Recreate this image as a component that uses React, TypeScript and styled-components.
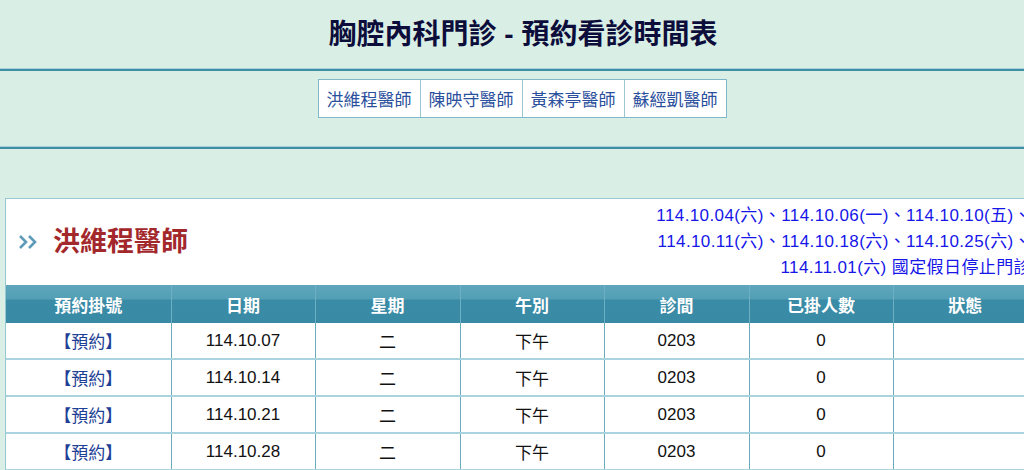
import React from "react";
import styled, { createGlobalStyle } from "styled-components";

const Global = createGlobalStyle`
  html, body { margin: 0; padding: 0; overflow: hidden; }
  body {
    background: #d9efe5;
    font-family: "Liberation Sans", "Noto Sans CJK TC", sans-serif;
  }
`;

const Page = styled.div`
  width: 1024px;
  height: 470px;
  overflow: hidden;
`;

const TitleBar = styled.header`
  height: 68px;
  box-sizing: border-box;
  padding-top: 2px;
  display: flex;
  align-items: center;
  justify-content: center;
`;

const Title = styled.h1`
  margin: 0;
  padding-left: 22px;
  font-size: 28px;
  line-height: 34px;
  font-weight: bold;
  color: #0d0d3c;
`;

const Divider = styled.div`
  height: 3px;
  background: linear-gradient(to bottom, #a6d1da 0, #a6d1da 1px, #3f8ea5 1px, #3f8ea5 3px);
`;

const Nav = styled.nav`
  height: 75px;
  box-sizing: border-box;
  padding-top: 8px;
  display: flex;
  justify-content: center;
  padding-left: 20px;
`;

const Tabs = styled.div`
  display: flex;
  height: 37px;
  border: 1px solid #80b7c9;
  background: #fff;
`;

const Tab = styled.a`
  display: flex;
  align-items: center;
  padding: 0 8px;
  font-size: 17px;
  color: #2a4f9c;
  text-decoration: none;
  & + & { border-left: 1px solid #9cc6d3; }
`;

const Box = styled.section`
  margin: 49px 0 0 5px;
  width: 1033px;
  background: #fff;
  border: 1px solid #97c9d3;
  border-bottom: none;
`;

const BoxHead = styled.div`
  height: 86px;
  display: flex;
  align-items: center;
  justify-content: space-between;
  padding: 0 8px 0 12px;
`;

const DocName = styled.h2`
  margin: 0;
  display: flex;
  align-items: center;
  gap: 13px;
  font-size: 27px;
  line-height: 34px;
  font-weight: bold;
  color: #a3282c;
`;

const Notice = styled.p`
  margin: 0;
  text-align: right;
  font-size: 17px;
  line-height: 26px;
  letter-spacing: 0.4px;
  color: #1616e8;
`;

const Table = styled.table`
  border-collapse: collapse;
  table-layout: fixed;
  width: 1031px;
`;

const Col = styled.col<{ $w: number }>`
  width: ${(p) => p.$w}px;
`;

const Th = styled.th`
  height: 38px;
  padding: 0;
  font-size: 17px;
  font-weight: bold;
  color: #fff;
  text-align: center;
  background: linear-gradient(to bottom, #5fa6bb 0, #539fb5 14px, #3a8ba6 15px, #388aa5 100%);
  border-left: 1px solid #6eb0c3;
  &:first-child { border-left: none; }
`;

const Td = styled.td`
  height: 35px;
  padding: 0;
  font-size: 17px;
  color: #111;
  text-align: center;
  border-left: 1px solid #6ba9bc;
  border-bottom: 2px solid #a9d4df;
  &:first-child { border-left: none; }
`;

const Book = styled.a`
  color: #1d3f95;
  text-decoration: none;
  font-size: 17px;
`;

const Chevrons = () => (
  <svg width="22" height="16" viewBox="0 0 22 16" fill="none" stroke="#5d9bb9" strokeWidth="2.6">
    <path d="M2 2 L8 8 L2 14" />
    <path d="M11 2 L17 8 L11 14" />
  </svg>
);

const doctors = ["洪維程醫師", "陳映守醫師", "黃森亭醫師", "蘇經凱醫師"];
const widths = [165, 144, 145, 144, 145, 144, 144];
const heads = ["預約掛號", "日期", "星期", "午別", "診間", "已掛人數", "狀態"];
const rows = ["114.10.07", "114.10.14", "114.10.21", "114.10.28"];

export default function App() {
  return (
    <Page>
      <Global />
      <TitleBar>
        <Title>胸腔內科門診 - 預約看診時間表</Title>
      </TitleBar>
      <Divider />
      <Nav>
        <Tabs>
          {doctors.map((d) => (
            <Tab key={d} href="#">{d}</Tab>
          ))}
        </Tabs>
      </Nav>
      <Divider />
      <Box>
        <BoxHead>
          <DocName>
            <Chevrons />
            洪維程醫師
          </DocName>
          <Notice>
            114.10.04(六)、114.10.06(一)、114.10.10(五)、
            <br />
            114.10.11(六)、114.10.18(六)、114.10.25(六)、
            <br />
            114.11.01(六) 國定假日停止門診
          </Notice>
        </BoxHead>
        <Table>
          <colgroup>
            {widths.map((w, i) => (
              <Col key={i} $w={w} />
            ))}
          </colgroup>
          <thead>
            <tr>
              {heads.map((h) => (
                <Th key={h}>{h}</Th>
              ))}
            </tr>
          </thead>
          <tbody>
            {rows.map((r) => (
              <tr key={r}>
                <Td><Book href="#">【預約】</Book></Td>
                <Td>{r}</Td>
                <Td>二</Td>
                <Td>下午</Td>
                <Td>0203</Td>
                <Td>0</Td>
                <Td></Td>
              </tr>
            ))}
          </tbody>
        </Table>
      </Box>
    </Page>
  );
}
